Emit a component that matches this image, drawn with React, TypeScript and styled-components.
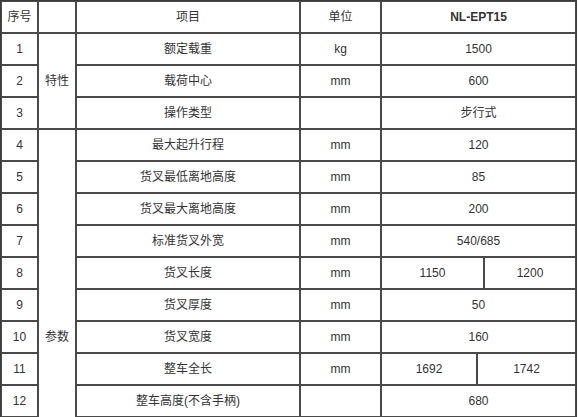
import React from 'react';
import styled, { createGlobalStyle } from 'styled-components';

const GlobalStyle = createGlobalStyle`
	html, body {
		margin: 0;
		padding: 0;
		background: #ffffff;
		overflow: hidden;
	}
	body {
		font-family: 'Liberation Sans', 'Noto Sans CJK SC', Arial, sans-serif;
		font-size: 12px;
		color: #333333;
	}
`;

const SpecTable = styled.table`
	width: 577px;
	table-layout: fixed;
	border-collapse: separate;
	border-spacing: 0;
	border: 1px solid #3c3c3c;
`;

const Col = styled.col<{ $w: number }>`
	width: ${(p) => p.$w}px;
`;

const Cell = styled.td<{ $bold?: boolean }>`
	box-sizing: border-box;
	height: 32px;
	padding: 0 2px;
	border: 1px solid #4a4a4a;
	text-align: center;
	vertical-align: middle;
	font-weight: ${(p) => (p.$bold ? 700 : 400)};
	color: #333333;
	line-height: 14px;
	white-space: nowrap;
`;

type Spec = {
	no: string;
	item: string;
	unit: string;
	values: string[];
	split?: 'left' | 'right';
};

const specs: Spec[] = [
	{ no: '1', item: '额定载重', unit: 'kg', values: ['1500'] },
	{ no: '2', item: '载荷中心', unit: 'mm', values: ['600'] },
	{ no: '3', item: '操作类型', unit: '', values: ['步行式'] },
	{ no: '4', item: '最大起升行程', unit: 'mm', values: ['120'] },
	{ no: '5', item: '货叉最低离地高度', unit: 'mm', values: ['85'] },
	{ no: '6', item: '货叉最大离地高度', unit: 'mm', values: ['200'] },
	{ no: '7', item: '标准货叉外宽', unit: 'mm', values: ['540/685'] },
	{ no: '8', item: '货叉长度', unit: 'mm', values: ['1150', '1200'], split: 'left' },
	{ no: '9', item: '货叉厚度', unit: 'mm', values: ['50'] },
	{ no: '10', item: '货叉宽度', unit: 'mm', values: ['160'] },
	{ no: '11', item: '整车全长', unit: 'mm', values: ['1692', '1742'], split: 'right' },
	{ no: '12', item: '整车高度(不含手柄)', unit: '', values: ['680'] },
];

// rows below the fold: the 参数 group keeps running past the bottom edge
const hiddenRows = 4;

const groups: Record<string, { label: string; span: number }> = {
	'1': { label: '特性', span: 3 },
	'4': { label: '参数', span: 9 + hiddenRows },
};

const ValueCells = ({ spec }: { spec: Spec }) => {
	if (spec.split === 'left') {
		return (
			<>
				<Cell colSpan={2}>{spec.values[0]}</Cell>
				<Cell>{spec.values[1]}</Cell>
			</>
		);
	}
	if (spec.split === 'right') {
		return (
			<>
				<Cell>{spec.values[0]}</Cell>
				<Cell colSpan={2}>{spec.values[1]}</Cell>
			</>
		);
	}
	return <Cell colSpan={3}>{spec.values[0]}</Cell>;
};

const App = () => {
	return (
		<>
			<GlobalStyle />
			<SpecTable>
				<colgroup>
					<Col $w={37} />
					<Col $w={38} />
					<Col $w={224} />
					<Col $w={81} />
					<Col $w={96} />
					<Col $w={7} />
					<Col $w={92} />
				</colgroup>
				<tbody>
					<tr>
						<Cell>序号</Cell>
						<Cell></Cell>
						<Cell>项目</Cell>
						<Cell>单位</Cell>
						<Cell colSpan={3} $bold>
							NL-EPT15
						</Cell>
					</tr>
					{specs.map((spec) => (
						<tr key={spec.no}>
							<Cell>{spec.no}</Cell>
							{groups[spec.no] && (
								<Cell rowSpan={groups[spec.no].span}>{groups[spec.no].label}</Cell>
							)}
							<Cell>{spec.item}</Cell>
							<Cell>{spec.unit}</Cell>
							<ValueCells spec={spec} />
						</tr>
					))}
					{Array.from({ length: hiddenRows }, (_, i) => (
						<tr key={`hidden-${i}`}>
							<Cell />
							<Cell />
							<Cell />
							<Cell colSpan={3} />
						</tr>
					))}
				</tbody>
			</SpecTable>
		</>
	);
};

export default App;
